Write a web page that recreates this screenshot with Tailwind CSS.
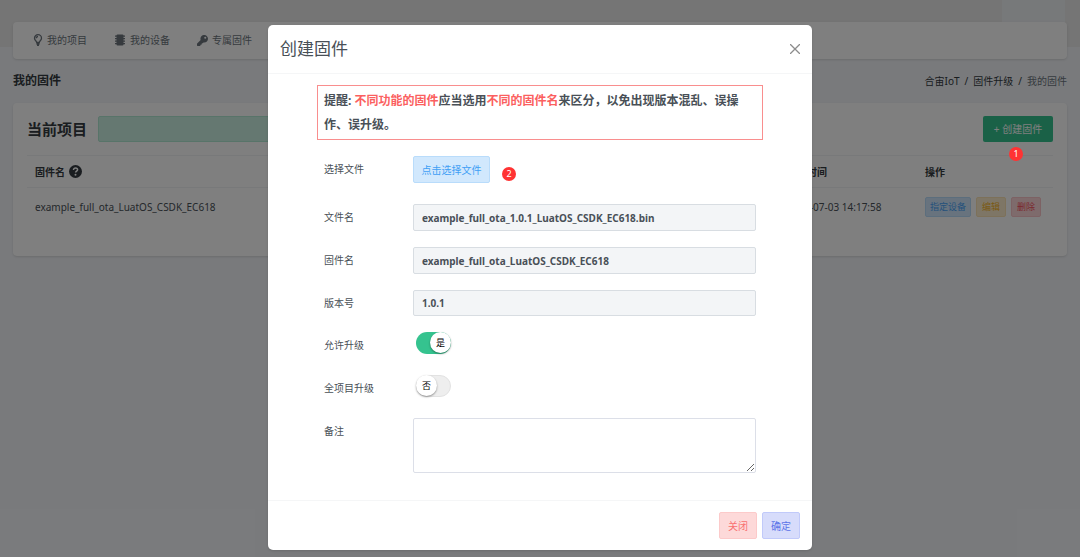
<!DOCTYPE html>
<html lang="zh-CN">
<head>
<meta charset="utf-8">
<meta name="viewport" content="width=device-width, initial-scale=1">
<title>我的固件</title>
<script src="https://cdn.jsdelivr.net/npm/@tailwindcss/browser@4"></script>
</head>
<body class="relative min-h-screen overflow-hidden bg-[#f3f5f9] font-['Noto_Sans','Noto_Sans_CJK_SC',sans-serif] text-[10px] leading-4 text-[#495057]">

<!-- page banner behind the navigation -->
<div class="absolute inset-x-0 top-0 flex h-[47px] justify-end bg-[#eaeaea] pr-[15px]" aria-hidden="true">
  <div class="h-full w-[63px] bg-[#eff2f5]"></div>
</div>

<div class="relative px-[13px] pt-[22px]">
  <nav class="flex h-[37px] items-center gap-[27px] rounded-sm bg-white px-5 pb-px text-[#6c757d] shadow-sm">
    <a href="#" class="flex items-center gap-1">
      <svg class="h-3 w-[10px]" viewBox="0 0 10 12" fill="none" stroke="currentColor" stroke-width="1.300"><path d="M3.700 8.500C3.700 7 1.500 6.300 1.500 4.200a3.500 3.500 0 0 1 7 0c0 2.100-2.200 2.800-2.200 4.300zM3.500 10h3M4 11.300h2M3.300 4.200c0-1 .7-1.700 1.700-1.700"/></svg>
      我的项目</a>
    <a href="#" class="flex items-center gap-1">
      <svg class="h-3 w-3" viewBox="0 0 12 12" fill="currentColor"><rect x="2.500" y="0.500" width="7" height="11" rx="1"/><path d="M1 1.500h10v1.200H1zM1 4h10v1.200H1zM1 6.500h10v1.200H1zM1 9h10v1.200H1z"/></svg>
      我的设备</a>
    <a href="#" class="flex items-center gap-1">
      <svg class="h-[11px] w-[11px]" viewBox="0 0 512 512" fill="currentColor"><path d="M512 176c0 97-79 176-176 176-11 0-22-1-33-3l-24 27a24 24 0 0 1-18 8h-37v40c0 13-11 24-24 24h-40v40c0 13-11 24-24 24H24c-13 0-24-11-24-24v-78c0-6 3-12 7-17l162-162a176 176 0 1 1 343-55zM336 128a48 48 0 1 0 96 0 48 48 0 1 0-96 0z"/></svg>
      专属固件</a>
  </nav>

  <div class="flex h-11 items-center justify-between">
    <h1 class="text-xs font-bold text-[#343a40]">我的固件</h1>
    <ol class="flex gap-[5px] text-[#343a40]">
      <li><a href="#">合宙IoT</a></li>
      <li aria-hidden="true">/</li>
      <li><a href="#">固件升级</a></li>
      <li aria-hidden="true">/</li>
      <li class="text-[#6c757d]">我的固件</li>
    </ol>
  </div>

  <main class="rounded-sm bg-white px-[14px] pt-[13px] pb-[30px] shadow-sm">
    <div class="flex items-center justify-between">
      <div class="flex items-center gap-[11px]">
        <h2 class="text-[15px] font-bold text-[#343a40]">当前项目</h2>
        <div class="h-[26px] w-[260px] rounded-xs border border-[#b1e8d2] bg-[#cbf0e2]"></div>
      </div>
      <button type="button" class="h-[26px] w-[70px] rounded-xs bg-[#35c38f] text-white">+ 创建固件</button>
    </div>
    <table class="mt-[13px] w-full table-fixed text-left">
      <thead>
        <tr class="h-8 border-y border-[#f1f3f5] text-[#343a40]">
          <th class="px-2 font-bold"><span class="flex items-center gap-1">固件名
            <svg class="h-[13px] w-[13px]" viewBox="0 0 13 13"><circle cx="6.500" cy="6.500" r="6.500" fill="#343a40"/><path d="M4.500 5c0-1.300.9-2 2-2s2.100.7 2.100 1.800c0 1.400-2 1.400-2 2.800" fill="none" stroke="#fff" stroke-width="1.500"/><circle cx="6.500" cy="9.700" r="1" fill="#fff"/></svg></span></th>
          <th class="w-[138px] px-2 font-bold">创建时间</th>
          <th class="w-[136px] px-2 font-bold">操作</th>
        </tr>
      </thead>
      <tbody>
        <tr class="h-[38px]">
          <td class="px-2">example_full_ota_LuatOS_CSDK_EC618</td>
          <td class="px-2">2023-07-03 14:17:58</td>
          <td class="px-2">
            <div class="flex gap-[5px] text-[9px]">
              <button type="button" class="h-5 w-[46px] rounded-xs border border-[#b9dcfb] bg-[#d0e7fd] text-[#4aa3f7]">指定设备</button>
              <button type="button" class="h-5 w-[30px] rounded-xs border border-[#fbe3b4] bg-[#fdedcd] text-[#f5b225]">编辑</button>
              <button type="button" class="h-5 w-[30px] rounded-xs border border-[#fbc4c8] bg-[#fdd6d9] text-[#f5515c]">删除</button>
            </div>
          </td>
        </tr>
      </tbody>
    </table>
  </main>
</div>

<div class="absolute inset-0 flex items-start justify-center bg-black/50 pt-[25px]">
  <form class="w-full max-w-[544px] rounded-[5px] bg-white shadow-sm" role="dialog" aria-labelledby="dialog-title">
    <header class="flex h-[49px] items-center justify-between border-b border-[#f5f6f7] px-3">
      <h2 id="dialog-title" class="text-[17px] leading-6">创建固件</h2>
      <button type="button" aria-label="关闭窗口" class="text-[#8c8c8c]">
        <svg class="h-[10px] w-[10px]" viewBox="0 0 10 10" fill="none" stroke="currentColor" stroke-width="1.300"><path d="M0 0l10 10M10 0L0 10"/></svg>
      </button>
    </header>

    <div class="px-[49px] pt-[11px] pb-[27px]">
      <p class="border border-[#f98e8e] px-[6px] pt-[3px] pb-[2px] text-xs leading-6 font-bold">提醒: <span class="text-[#fb5f5f]">不同功能的固件</span>应当选用<span class="text-[#fb5f5f]">不同的固件名</span>来区分，以免出现版本混乱、误操作、误升级。</p>

      <div class="mt-4 grid grid-cols-[89px_1fr] gap-y-4 px-[7px] leading-[26px]">
        <span>选择文件</span>
        <div class="mb-[5px]">
          <button type="button" class="block h-[27px] w-[77px] rounded-xs border border-[#b9dcfb] bg-[#d1e8fd] text-[#3f9ff5]">点击选择文件</button>
        </div>
        <label for="file-name">文件名</label>
        <input id="file-name" readonly value="example_full_ota_1.0.1_LuatOS_CSDK_EC618.bin" class="h-[27px] w-full rounded-xs border border-[#d8dde2] bg-[#f3f5f7] px-2 font-bold">
        <label for="firmware-name">固件名</label>
        <input id="firmware-name" readonly value="example_full_ota_LuatOS_CSDK_EC618" class="h-[27px] w-full rounded-xs border border-[#d8dde2] bg-[#f3f5f7] px-2 font-bold">
        <label for="version">版本号</label>
        <input id="version" readonly value="1.0.1" class="h-[26px] w-full rounded-xs border border-[#d8dde2] bg-[#f3f5f7] px-2 font-bold">
        <label for="allow" class="h-[27px]">允许升级</label>
        <div class="relative ml-[3px] flex h-[22px] w-[35px] justify-end">
          <input id="allow" type="checkbox" checked class="absolute inset-0 appearance-none rounded-full bg-[#35c38f]">
          <span class="pointer-events-none relative flex h-[21px] w-[21px] items-center justify-center rounded-full bg-white text-[9px] text-black shadow-[0_1px_2px_rgba(0,0,0,0.4)]">是</span>
        </div>
        <label for="all-projects" class="h-[27px]">全项目升级</label>
        <div class="relative ml-[3px] flex h-[22px] w-[35px]">
          <input id="all-projects" type="checkbox" class="absolute inset-0 appearance-none rounded-full border border-[#e2e2e2] bg-[#eeeeee]">
          <span class="pointer-events-none relative flex h-[21px] w-[21px] items-center justify-center rounded-full bg-white text-[9px] text-black shadow-[0_1px_2px_rgba(0,0,0,0.4)]">否</span>
        </div>
        <label for="remark">备注</label>
        <textarea id="remark" class="block h-[55px] w-full resize rounded-xs border border-[#dcdfe8] px-2 py-1"></textarea>
      </div>
    </div>

    <footer class="flex justify-end gap-[5px] border-t border-[#f5f6f7] px-3 py-[11px]">
      <button type="button" class="h-[27px] w-[38px] rounded-xs border border-[#fccaca] bg-[#fdd9d9] text-[#f97070]">关闭</button>
      <button type="submit" class="h-[27px] w-[38px] rounded-xs border border-[#c1cafa] bg-[#d7dcfb] text-[#5b73e8]">确定</button>
    </footer>
  </form>
</div>

<!-- step markers -->
<span class="absolute top-[147px] right-[57px] flex h-[14px] w-[14px] items-center justify-center rounded-full bg-[#ff3333] text-[9px] text-white">1</span>
<span class="absolute top-[167px] left-[502px] flex h-[14px] w-[14px] items-center justify-center rounded-full bg-[#ff3333] text-[9px] text-white">2</span>
</body>
</html>
